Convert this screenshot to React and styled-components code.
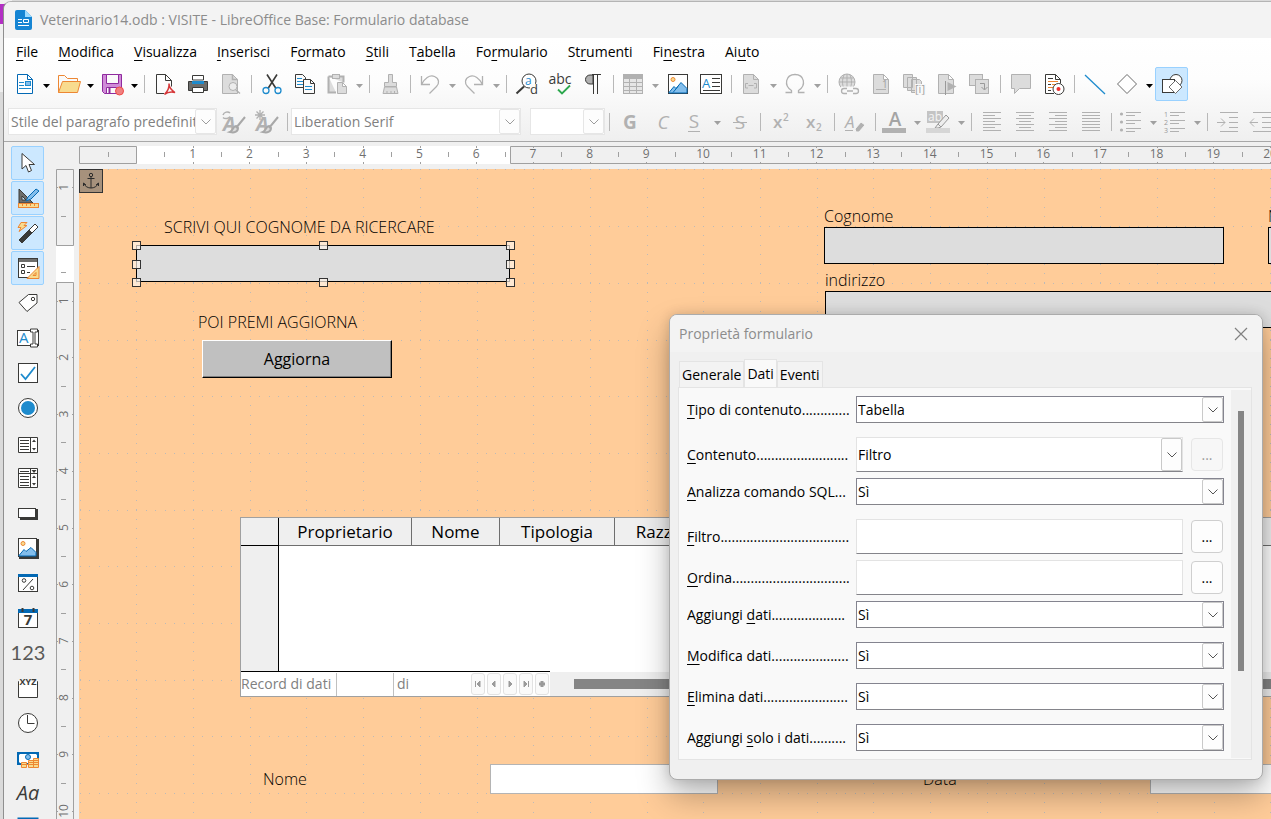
import React, { useState } from "react";
import styled, { createGlobalStyle } from "styled-components";

// pixels in one centimetre of the page at the current zoom
const CM = 56.7;
const PAGE_ZERO_X = 58;
const PAGE_ZERO_Y = 76;

const GREY = "#b1b1b1";
const SOFT = "#dcdcdc";
const DARK = "#3a3a38";
const BLUE = "#1e8bcd";

const menus = [
  ["", "F", "ile"],
  ["", "M", "odifica"],
  ["", "V", "isualizza"],
  ["", "I", "nserisci"],
  ["F", "o", "rmato"],
  ["", "S", "tili"],
  ["T", "a", "bella"],
  ["Fo", "r", "mulario"],
  ["St", "r", "umenti"],
  ["Fi", "n", "estra"],
  ["Ai", "u", "to"],
];

const ICONS = {
  new: (
    <>
      <path d="M4.500 2.500h10l5 5v14h-15z" fill="#fff" stroke="#0369b4" />
      <path d="M14.500 2.500v5h5" fill="none" stroke="#0369b4" />
      <path d="M6 10.500h5M6 13.500h5M6 16.500h12" stroke={BLUE} />
      <rect x="12.500" y="9.500" width="5" height="4" fill="#83beec" stroke={BLUE} />
    </>
  ),
  folder: (
    <>
      <path d="M1.500 20.500v-17h6l3 3h10v3" fill="#fafafa" stroke="#ed8733" />
      <path d="M1.500 20.500l4-11h18l-3 11z" fill="#f8db8f" stroke="#ed8733" />
    </>
  ),
  save: (
    <>
      <path d="M1.500 2.500h19v19h-17l-2-2z" fill="#d08bd8" stroke="#8f2a9e" />
      <path d="M5.500 2.500v9h12v-9z" fill="#fafafa" stroke="#8f2a9e" />
      <path d="M5.500 21.500v-6h10v6z" fill="#fafafa" stroke="#8f2a9e" />
      <path d="M8.500 16v5" stroke="#8f2a9e" strokeWidth="2" />
      <circle cx="18.500" cy="19" r="4" fill="#f08080" stroke="#ed4b48" />
    </>
  ),
  pdf: (
    <>
      <path d="M11 21.500h-7.500v-19h9l6 6v6M12.500 2.500v6h6" fill="none" stroke={DARK} />
      <path d="M11.500 22.500c3-3 5-7 4.500-11c0 4 3 7 6 9c-4-1-8 0-10.500 2z" fill="none" stroke="#d6383a" strokeWidth="1.500" />
    </>
  ),
  print: (
    <>
      <path d="M6.500 8v-4.500h11v4.500z" fill="#fff" stroke={DARK} />
      <path d="M2.500 9.500h19v9h-19z" fill="#6d6d6b" stroke={DARK} />
      <path d="M6 10.500h12" stroke={BLUE} strokeWidth="3" />
      <path d="M6.500 15.500h11v5h-11z" fill="#fff" stroke={DARK} />
    </>
  ),
  preview: (
    <>
      <path d="M3.500 2.500h10l5 5v14h-15z" fill={SOFT} stroke={GREY} />
      <path d="M13.500 2.500v5h5M17 18l4 3.500" fill="none" stroke={GREY} strokeWidth="1.500" />
      <circle cx="14" cy="14.500" r="4" fill="#ececec" stroke={GREY} />
    </>
  ),
  cut: (
    <>
      <path d="M7 2.500l9 14M17 2.500l-9 14" stroke={DARK} strokeWidth="1.600" />
      <circle cx="6" cy="18.500" r="3" fill="none" stroke={BLUE} strokeWidth="1.300" />
      <circle cx="18" cy="18.500" r="3" fill="none" stroke={BLUE} strokeWidth="1.300" />
    </>
  ),
  copy: (
    <>
      <path d="M2.500 2.500h7l3 3v10h-10z" fill="#fafafa" stroke={DARK} />
      <path d="M4 6.500h5M4 9.500h6M4 12.500h6" stroke={BLUE} />
      <path d="M10.500 7.500h7l4 4v10h-11zM17.500 7.500v4h4" fill="#fafafa" stroke={DARK} />
      <path d="M12 14.500h7M12 17.500h7" stroke={BLUE} />
    </>
  ),
  paste: (
    <>
      <path d="M2.500 4.500h15v6M10 20.500h-7.500v-16" fill={SOFT} stroke={GREY} strokeWidth="2" />
      <rect x="6.500" y="2.500" width="7" height="4" fill={SOFT} stroke={GREY} />
      <path d="M11.500 10.500h5l4 4v7h-9zM16.500 10.500v4h4" fill={SOFT} stroke={GREY} />
    </>
  ),
  brush: (
    <>
      <path d="M10.500 10.500v-8h4v8h4v4h-12v-4z" fill={SOFT} stroke={GREY} />
      <path d="M6.500 15l-1.500 6.500h15l-1.500-6.500z" fill={SOFT} stroke={GREY} />
      <path d="M9 21v-2M13 21v-2M16.500 21v-2" stroke={GREY} />
    </>
  ),
  undo: (
    <path d="M2.500 4v8.500h8.500M2.500 12.500c3-6 8-10 13-8c5 2 5 7 2 10l-7 7" fill="none" stroke={GREY} strokeWidth="1.300" />
  ),
  redo: (
    <path d="M19.500 4v8.500h-8.500M19.500 12.500c-3-6-8-10-13-8c-5 2-5 7-2 10l7 7" fill="none" stroke={GREY} strokeWidth="1.300" />
  ),
  find: (
    <>
      <circle cx="14" cy="9" r="7" fill="#fff" stroke={DARK} />
      <path d="M9 14.500l-7.500 7" stroke={DARK} strokeWidth="2" />
      <text x="10" y="13" fontSize="12" fill={BLUE}>a</text>
      <rect x="15" y="12" width="8" height="10" fill="#fbfbfb" />
      <text x="15" y="22" fontSize="13" fill={DARK}>d</text>
    </>
  ),
  spell: (
    <>
      <text x="12" y="12" fontSize="14" textAnchor="middle" fill={DARK}>abc</text>
      <path d="M10 17.500l4 4l8-8" fill="none" stroke="#2ea84f" strokeWidth="1.800" />
    </>
  ),
  pilcrow: (
    <>
      <path d="M12 3h-3a4.500 4.500 0 0 0 0 9h3z" fill={GREY} stroke={DARK} />
      <path d="M11 2.500h9M12.500 2.500v19.500M16.500 2.500v19.500" stroke={DARK} />
    </>
  ),
  table: (
    <>
      <rect x="1.500" y="2.500" width="19" height="19" fill="#e6e6e6" stroke={GREY} />
      <rect x="1" y="2" width="20" height="5" fill={GREY} />
      <path d="M1 10.500h20M1 14.500h20M1 18.500h20M7.500 6v16M14.500 6v16" stroke={GREY} />
    </>
  ),
  image: (
    <>
      <rect x="2.500" y="2.500" width="19" height="19" fill="#fff" stroke={DARK} />
      <circle cx="7" cy="7.500" r="2" fill="#f8db8f" stroke="#ed8733" />
      <path d="M3 20.500l5-6l2 2l5-6l6 6v4.500h-18z" fill="#83beec" stroke="#0369b4" />
      <path d="M7 20.500l5-6" stroke="#0369b4" />
    </>
  ),
  textbox: (
    <>
      <rect x="1.500" y="2.500" width="21" height="19" fill="#fff" stroke={DARK} />
      <text x="3" y="16" fontSize="13" fill={BLUE}>A</text>
      <path d="M13 6.500h8M13 10.500h8M13 14.500h8M4 18.500h17" stroke={DARK} />
    </>
  ),
  field: (
    <>
      <path d="M3.500 2.500h10l5 5v14h-15z" fill={SOFT} stroke={GREY} />
      <path d="M13.500 2.500v5h5M8 11.500h-2.500v4.500h2.500M14 11.500h2.500v4.500h-2.500M8.500 13.500h5" fill="none" stroke={GREY} />
    </>
  ),
  omega: (
    <path d="M1.500 20.500h6v-2c-8-5-6-16 3.500-16s11.500 11 3.500 16v2h6" fill="none" stroke={GREY} strokeWidth="1.300" />
  ),
  link: (
    <>
      <circle cx="11" cy="10" r="8" fill={SOFT} stroke={GREY} />
      <path d="M3 10h16M11 2v16M4.500 6h13M8 3c-2 5-2 9 0 14M14 3c2 5 2 9 0 14" fill="none" stroke={GREY} />
      <path d="M5 14.500h18v8h-18z" fill="#f8f8f8" />
      <path d="M11 16.500h-3a2.500 2.500 0 0 0 0 5h3M17 16.500h3a2.500 2.500 0 0 1 0 5h-3M11 19h6" fill="none" stroke={GREY} strokeWidth="1.300" />
    </>
  ),
  footnote: (
    <>
      <path d="M4.500 2.500h10l5 5v14h-15zM14.500 2.500v5h5" fill={SOFT} stroke={GREY} />
      <text x="13" y="16" fontSize="10" fill="#a0a0a0">1</text>
      <path d="M7 17.500h10" stroke={GREY} />
    </>
  ),
  endnote: (
    <>
      <path d="M1.500 2.500h9v13h-9zM5.500 5.500h9v13h-9zM9.500 7.500h8l2 2v11h-10z" fill={SOFT} stroke={GREY} />
      <rect x="13" y="12" width="11" height="11" fill="#f8f8f8" />
      <text x="13" y="21" fontSize="11" fill="#a0a0a0">[i]</text>
    </>
  ),
  bookmark: (
    <>
      <path d="M3.500 2.500h10l5 5v14h-15zM13.500 2.500v5h5" fill={SOFT} stroke={GREY} />
      <path d="M10.500 9v14" stroke="#999" />
      <path d="M12.500 10v9l9-4.500z" fill={GREY} />
    </>
  ),
  crossref: (
    <>
      <rect x="1.500" y="2.500" width="13" height="11" fill={SOFT} stroke={GREY} />
      <rect x="7.500" y="7.500" width="13" height="14" fill={SOFT} stroke={GREY} />
      <path d="M12 11.500h4.500v6M13.500 15l3 3l3-3" fill="none" stroke="#999" />
    </>
  ),
  comment: <path d="M2.500 2.500h19v14h-11l-5 5v-5h-3z" fill={SOFT} stroke={GREY} />,
  track: (
    <>
      <path d="M12 21.500h-8.500v-19h10l5 5v4M13.500 2.500v5h5" fill="#fff" stroke={DARK} />
      <path d="M6 6.500h5M6 12.500h3M6 18.500h3" stroke={DARK} />
      <path d="M6 9.500h10M10 12.500h4M6 15.500h5" stroke="#ed8733" />
      <circle cx="16.500" cy="17" r="5.500" fill="#fff" stroke={DARK} />
      <circle cx="16.500" cy="17" r="2" fill="#ee2e2e" />
    </>
  ),
  line: <path d="M2 3l20 19" stroke={BLUE} strokeWidth="1.300" />,
  shape: <path d="M11 2.500l9.500 9.500l-9.500 9.500l-9.500-9.500z" fill="#fff" stroke="#6b6b6b" />,
  draw: (
    <>
      <circle cx="16" cy="8.500" r="6" fill="#fff" stroke={DARK} />
      <rect x="2.500" y="7.500" width="12" height="13" fill="#fff" stroke={DARK} />
      <path d="M15.500 8.500l6.500 6.500l-6.500 6.500l-6.500-6.500z" fill="#fff" stroke="#6b6b6b" />
    </>
  ),
  styleUpdate: (
    <>
      <path d="M1 5c1-3 5-4 7-2M8 6.500c-1 2-5 3-7 1" fill="none" stroke={GREY} strokeWidth="1.500" />
      <text x="1" y="21" fontSize="20" fontStyle="italic" fontWeight="700" fill={GREY}>A</text>
      <path d="M23 7l-9 11M14 16c-3 0-3 5-6 6c4 1 8 0 8-4z" fill={SOFT} stroke="#a8a8a8" strokeWidth="2" />
    </>
  ),
  styleNew: (
    <>
      <path d="M5 0v10M0 5h10M1.500 1.500l7 7M8.500 1.500l-7 7" stroke={GREY} strokeWidth="1.300" />
      <text x="1" y="21" fontSize="20" fontStyle="italic" fontWeight="700" fill={GREY}>A</text>
      <path d="M23 7l-9 11M14 16c-3 0-3 5-6 6c4 1 8 0 8-4z" fill={SOFT} stroke="#a8a8a8" strokeWidth="2" />
    </>
  ),
  bold: <text x="12" y="19" fontSize="19" fontWeight="700" textAnchor="middle" fill={GREY}>G</text>,
  italic: <text x="12" y="19" fontSize="19" fontStyle="italic" textAnchor="middle" fill={GREY}>C</text>,
  underline: (
    <>
      <text x="10" y="18" fontSize="19" textAnchor="middle" fill={GREY}>S</text>
      <path d="M4 21.500h12" stroke={GREY} />
    </>
  ),
  strike: (
    <>
      <text x="12" y="19" fontSize="19" textAnchor="middle" fill={GREY}>S</text>
      <path d="M5 12.500h14" stroke={GREY} />
    </>
  ),
  sup: (
    <>
      <text x="4" y="18" fontSize="17" fontWeight="600" fill={GREY}>x</text>
      <text x="14" y="11" fontSize="10" fontWeight="600" fill={GREY}>2</text>
    </>
  ),
  sub: (
    <>
      <text x="4" y="18" fontSize="17" fontWeight="600" fill={GREY}>x</text>
      <text x="14" y="21" fontSize="10" fontWeight="600" fill={GREY}>2</text>
    </>
  ),
  clear: (
    <>
      <text x="2" y="18" fontSize="17" fontStyle="italic" fill={GREY}>A</text>
      <path d="M2 20.500h8" stroke={GREY} />
      <path d="M12 19l6-7l4 3l-6 7h-3z" fill={GREY} stroke="#f4f4f4" />
    </>
  ),
  fontColor: (
    <>
      <text x="11" y="16" fontSize="19" fontWeight="600" textAnchor="middle" fill="#a4a4a4">A</text>
      <rect x="-2" y="18" width="24" height="5" fill={GREY} />
    </>
  ),
  highlight: (
    <>
      <rect x="-1" y="1" width="16" height="12" fill="#c4c4c4" />
      <text x="0" y="11" fontSize="12" fill="#f4f4f4">ab</text>
      <path d="M10 14l8-9l3 3l-8 9zM10 14l-3 4h3l3-1" fill="#eee" stroke="#999" />
      <rect x="-2" y="18" width="24" height="5" fill="#d6d6d6" />
    </>
  ),
  alignLeft: <path d="M3 2.500h18M3 5.500h12M3 8.500h18M3 11.500h12M3 14.500h18M3 17.500h12M3 20.500h18" stroke={GREY} />,
  alignCenter: <path d="M3 2.500h18M6 5.500h12M3 8.500h18M6 11.500h12M3 14.500h18M6 17.500h12M3 20.500h18" stroke={GREY} />,
  alignRight: <path d="M3 2.500h18M9 5.500h12M3 8.500h18M9 11.500h12M3 14.500h18M9 17.500h12M3 20.500h18" stroke={GREY} />,
  justify: <path d="M3 2.500h18M3 5.500h18M3 8.500h18M3 11.500h18M3 14.500h18M3 17.500h18M3 20.500h18" stroke={GREY} />,
  bullets: (
    <>
      <path d="M6 2.500h15M6 5.500h9M6 10.500h15M6 13.500h9M6 18.500h15M6 21.500h9" stroke={GREY} />
      <circle cx="1.500" cy="4" r="1.600" fill={GREY} />
      <circle cx="1.500" cy="12" r="1.600" fill={GREY} />
      <circle cx="1.500" cy="20" r="1.600" fill={GREY} />
    </>
  ),
  numbers: (
    <>
      <path d="M6 2.500h15M6 5.500h9M6 10.500h15M6 13.500h9M6 18.500h15M6 21.500h9" stroke={GREY} />
      <text x="0" y="7" fontSize="7" fill="#999">1</text>
      <text x="0" y="15" fontSize="7" fill="#999">2</text>
      <text x="0" y="23" fontSize="7" fill="#999">3</text>
    </>
  ),
  indent: <path d="M4 2.500h18M13 7.500h9M13 12.500h9M13 17.500h9M4 21.500h18M1 12.500h8M5 8.500l4 4l-4 4" fill="none" stroke={GREY} />,
  outdent: <path d="M4 2.500h18M13 7.500h9M13 12.500h9M13 17.500h9M4 21.500h18M1 12.500h8M5 8.500l-4 4l4 4" fill="none" stroke={GREY} />,
  // form controls palette
  pointer: <path d="M6 2.500v15.500l4-3.500l2.500 6.500l3-1.500l-2.500-6h5.500z" fill="#fff" stroke={DARK} />,
  design: (
    <>
      <path d="M3 3v14h14zM6 10v4h4z" fill="#6d6d6b" fillRule="evenodd" stroke={DARK} />
      <path d="M10 15l2-4l8-8l3 2l-8 8z" fill="#83beec" stroke="#0369b4" />
      <rect x="2.500" y="17.500" width="20" height="4" fill="#f8db8f" stroke="#ed8733" />
      <path d="M6.500 18v2M10.500 18v2M14.500 18v2M18.500 18v2" stroke="#ed8733" />
    </>
  ),
  wizard: (
    <>
      <path d="M3 19l10-10l3 3l-10 10z" fill={DARK} stroke={DARK} />
      <path d="M13 9l6-6l3 3l-6 6z" fill="#fff" stroke={DARK} />
      <path d="M5 1.500h6l-3 3h3l-8 6l2-4h-3z" fill="#f8db8f" stroke="#ed8733" />
    </>
  ),
  formDesign: (
    <>
      <rect x="2.500" y="2.500" width="19" height="19" fill="#fff" stroke={DARK} />
      <rect x="3" y="3" width="18" height="3" fill="#6d6d6b" />
      <path d="M5.500 8.500h3v3h-3zM5.500 14.500h3v3h-3zM11 10.500h8M11 16.500h3" fill="none" stroke={DARK} />
      <path d="M11 22.500h12v-12zM17 19.500h3v-3z" fill="#f8db8f" stroke="#ed8733" />
    </>
  ),
  label: (
    <>
      <path d="M12.500 3.500h8.500v8.500l-10 8.500l-8-9z" fill="#fff" stroke={DARK} />
      <circle cx="17" cy="8" r="1.700" fill="none" stroke={DARK} />
    </>
  ),
  textField: (
    <>
      <rect x="1.500" y="4.500" width="21" height="15" fill="#fff" stroke={DARK} />
      <text x="3" y="17" fontSize="15" fill={BLUE}>A</text>
      <path d="M14.500 3v3h2.500v12h-2.500v3h7v-3h-2.500v-12h2.500v-3z" stroke={DARK} fill="#fff" />
    </>
  ),
  check: (
    <>
      <rect x="2.500" y="2.500" width="19" height="19" fill="#fff" stroke={DARK} />
      <path d="M5 13l4.500 5l9.500-12" fill="none" stroke={BLUE} strokeWidth="1.800" />
    </>
  ),
  radio: (
    <>
      <circle cx="12" cy="12" r="9.500" fill="#fff" stroke={DARK} />
      <circle cx="12" cy="12" r="7" fill={BLUE} />
    </>
  ),
  listBox: (
    <>
      <path d="M2.500 6.500h19v15h-19zM14.500 6.500v15" fill="#fff" stroke={DARK} />
      <path d="M4 9.500h9M4 12.500h9M4 15.500h9M4 18.500h9" stroke={DARK} />
      <path d="M16 11h4l-2-2.500zM16 17h4l-2 2.500z" fill={DARK} />
    </>
  ),
  comboBox: (
    <>
      <path d="M2.500 2.500h19v19h-19zM2.500 7.500h19M14.500 2.500v19" fill="#fff" stroke={DARK} />
      <path d="M4 5.500h9M4 10.500h9M4 13.500h9M4 16.500h9M4 19.500h9" stroke={DARK} />
      <path d="M15.500 4h5l-2.500 3zM16 12h4l-2-2.500zM16 17h4l-2 2.500z" fill={DARK} />
    </>
  ),
  pushButton: (
    <>
      <rect x="4" y="8" width="18" height="11" fill={DARK} />
      <rect x="2.500" y="7.500" width="17" height="9" fill="#fff" stroke={DARK} />
    </>
  ),
  imageButton: (
    <>
      <rect x="3" y="3" width="20" height="20" fill={DARK} />
      <rect x="2.500" y="2.500" width="18" height="18" fill="#fff" stroke={DARK} />
      <circle cx="7" cy="7.500" r="2" fill="#f8db8f" stroke="#ed8733" />
      <path d="M3 19.500l5-6l2 2l5-4l5 5v3.500h-17z" fill="#83beec" stroke="#0369b4" />
    </>
  ),
  formatted: (
    <>
      <rect x="2.500" y="3.500" width="19" height="17" fill="#fff" stroke={DARK} />
      <rect x="2" y="3" width="20" height="3" fill="#0369b4" />
      <path d="M17 8l-10 11" stroke={DARK} />
      <circle cx="8" cy="9.500" r="1.800" fill="none" stroke={DARK} />
      <circle cx="16" cy="17" r="1.800" fill="none" stroke={DARK} />
    </>
  ),
  date: (
    <>
      <rect x="2.500" y="4.500" width="19" height="17" fill="#fff" stroke={DARK} />
      <rect x="2" y="3" width="20" height="4" fill="#0369b4" />
      <path d="M6.500 2v4M17.500 2v4" stroke={DARK} strokeWidth="2" />
      <text x="12" y="19" fontSize="15" fontWeight="700" textAnchor="middle" fill={DARK}>7</text>
    </>
  ),
  number: (
    <text x="12" y="19" fontSize="20" textAnchor="middle" fill="#5a5a58" fontFamily="Liberation Sans Narrow, Lato, sans-serif">
      123
    </text>
  ),
  pattern: (
    <>
      <path d="M3 5.500h-.5v16h19v-16h-.5" fill="#fff" stroke={DARK} />
      <text x="12" y="9" fontSize="9" fontWeight="700" textAnchor="middle" fill={DARK}>XYZ</text>
    </>
  ),
  time: (
    <>
      <circle cx="12" cy="12" r="9.500" fill="#fff" stroke={DARK} />
      <path d="M11.500 4v8.500h7" fill="none" stroke={DARK} />
    </>
  ),
  currency: (
    <>
      <rect x="2" y="7" width="20" height="11" fill="#fff" stroke="#0369b4" strokeWidth="2" />
      <path d="M1 6h5l-5 5zM23 6h-5l5 5zM1 19v-5l5 5z" fill="#0369b4" />
      <circle cx="12" cy="11" r="2.500" fill="#83beec" stroke="#0369b4" />
      <path d="M5.500 16.500h5v5h-5zM12.500 14.500h5v7h-5zM17.500 12.500h5v9h-5z" fill="#f8db8f" stroke="#ed8733" />
      <path d="M5 18.500h18M12 16.500h11M17 14.500h6" stroke="#ed8733" />
    </>
  ),
  fontwork: <text x="12" y="19" fontSize="20" fontStyle="italic" textAnchor="middle" fill={DARK}>Aa</text>,
  navigation: <rect x="2.500" y="2.500" width="19" height="19" fill="#fff" stroke="#0369b4" strokeWidth="2" />,
};

// "|" is a separator, a trailing "v" marks a split button
const standardBar = [
  ["new", "Nuovo", "v"], ["folder", "Apri", "v"], ["save", "Salva", "v"], "|",
  ["pdf", "Esporta in PDF"], ["print", "Stampa"], ["preview", "Anteprima"], "|",
  ["cut", "Taglia"], ["copy", "Copia"], ["paste", "Incolla", "v", true], "|",
  ["brush", "Clona"], "|",
  ["undo", "Annulla", "v", true], ["redo", "Ripristina", "v", true], "|",
  ["find", "Trova"], ["spell", "Controllo ortografico"], ["pilcrow", "Segni"], "|",
  ["table", "Tabella", "v", true], ["image", "Immagine"], ["textbox", "Casella di testo"], "|",
  ["field", "Comando di campo", "v", true], ["omega", "Simbolo", "v", true], "|",
  ["link", "Collegamento"], ["footnote", "Nota a piè di pagina"], ["endnote", "Nota di chiusura"],
  ["bookmark", "Segnalibro"], ["crossref", "Riferimento"], "|",
  ["comment", "Commento"], ["track", "Revisioni"], "|",
  ["line", "Linea"], ["shape", "Forme", "v"],
];

const formatBar = [
  "|", ["bold", "Grassetto"], ["italic", "Corsivo"], ["underline", "Sottolineato", "v", true], ["strike", "Barrato"], "|",
  ["sup", "Apice"], ["sub", "Pedice"], "|", ["clear", "Pulisci"], "|",
  ["fontColor", "Colore carattere", "v", true], ["highlight", "Evidenziazione", "v", true], "|",
  ["alignLeft", "Sinistra"], ["alignCenter", "Centro"], ["alignRight", "Destra"], ["justify", "Giustificato"], "|",
  ["bullets", "Elenco puntato", "v", true], ["numbers", "Elenco numerato", "v", true], "|",
  ["indent", "Aumenta rientro"], ["outdent", "Riduci rientro"],
];

const palette = [
  "pointer", "design", "wizard", "formDesign", "label", "textField", "check", "radio", "listBox", "comboBox",
  "pushButton", "imageButton", "formatted", "date", "number", "pattern", "time", "currency", "fontwork", "navigation",
];

const properties = [
  { name: "tipo", label: ["", "T", "ipo di contenuto"], dots: 13, kind: "list", value: "Tabella" },
  { name: "contenuto", label: ["", "C", "ontenuto"], dots: 25, kind: "combo", value: "Filtro" },
  { name: "sql", label: ["", "A", "nalizza comando SQL"], dots: 3, kind: "list", value: "Sì" },
  { name: "filtro", label: ["", "F", "iltro"], dots: 35, kind: "text" },
  { name: "ordina", label: ["", "O", "rdina"], dots: 32, kind: "text" },
  { name: "aggiungi", label: ["Aggiungi ", "d", "ati"], dots: 20, kind: "list", value: "Sì" },
  { name: "modifica", label: ["", "M", "odifica dati"], dots: 21, kind: "list", value: "Sì" },
  { name: "elimina", label: ["", "E", "limina dati"], dots: 23, kind: "list", value: "Sì" },
  { name: "solo", label: ["Aggiungi ", "s", "olo i dati"], dots: 10, kind: "list", value: "Sì" },
];

const Icon = ({ name }) => (
  <IconSvg viewBox="0 0 24 24" aria-hidden="true">
    {ICONS[name]}
  </IconSvg>
);

const Chevron = () => (
  <svg width="10" height="6" viewBox="0 0 10 6" aria-hidden="true">
    <path d="M0.500 0.500l4.500 4.500l4.500-4.500" fill="none" stroke="currentColor" />
  </svg>
);

const ToolItems = ({ items }) =>
  items.map((item, i) => {
    if (item === "|") return <Separator key={i} />;
    const [name, title, split, disabled] = item;
    return (
      <React.Fragment key={i}>
        <ToolButton aria-label={title}>
          <Icon name={name} />
        </ToolButton>
        {split && (
          <SplitArrow aria-label={title + " menu"} $disabled={disabled}>
            <svg width="7" height="4" viewBox="0 0 7 4">
              <path d="M0 0h7l-3.500 4z" fill="currentColor" />
            </svg>
          </SplitArrow>
        )}
      </React.Fragment>
    );
  });

const HorizontalRuler = () => {
  const marks = Array.from({ length: 22 }, (_, i) => i);
  return (
    <HRuler>
      <rect x="58" y="0" width="374" height="18" fill="#fff" />
      <path d="M0.500 0.500h57v17h-57zM1400 0.500h-968.500v17h968.500" fill="none" stroke="#a0a0a0" />
      <path d="M29.500 6v5" stroke="#a0a0a0" />
      {marks.map((n) => (
        <g key={n}>
          <path d={`M${Math.round(PAGE_ZERO_X + (n + 0.5) * CM) - 0.5} 6v5`} stroke="#a0a0a0" />
          {n > 0 && (
            <>
              <path d={`M${Math.round(PAGE_ZERO_X + n * CM) - 0.5} 0v2m0 14v2`} stroke="#a0a0a0" />
              <text x={PAGE_ZERO_X + n * CM - 1} y="12" textAnchor="middle">{n}</text>
            </>
          )}
        </g>
      ))}
    </HRuler>
  );
};

const VerticalRuler = () => {
  const marks = Array.from({ length: 12 }, (_, i) => i - 1);
  return (
    <VRuler>
      <rect x="0" y="77" width="18" height="36" fill="#fff" />
      <path d="M0.500 0.500h17v76h-17zM0.500 1200v-1086.500h17v1086.500" fill="none" stroke="#a0a0a0" />
      {marks.map((n) => (
        <g key={n}>
          <path d={`M5 ${Math.round(PAGE_ZERO_Y + (n + 0.5) * CM) - 0.5}h5`} stroke="#a0a0a0" />
          {n !== 0 && (
            <>
              <path d={`M0 ${Math.round(PAGE_ZERO_Y + n * CM) - 0.5}h2m14 0h2`} stroke="#a0a0a0" />
              <text transform={`translate(12 ${PAGE_ZERO_Y + n * CM - 1}) rotate(-90)`} textAnchor="middle">
                {Math.abs(n)}
              </text>
            </>
          )}
        </g>
      ))}
    </VRuler>
  );
};

// dotted snap grid, six dots to a centimetre along every whole line
const SnapGrid = () => {
  let d = "";
  for (let i = 0; i < 26; i++) {
    for (let j = 0; j < 90; j++) {
      d += `M${Math.round(i * CM + 0.6)} ${Math.round((j * CM) / 6)}h1v1h-1z`;
    }
  }
  for (let j = 0; j < 15; j++) {
    for (let i = 0; i < 150; i++) {
      d += `M${Math.round((i * CM) / 6 + 0.6)} ${Math.round(j * CM + 0.4)}h1v1h-1z`;
    }
  }
  return (
    <GridSvg aria-hidden="true">
      <path d={d} fill="#bdbab8" shapeRendering="crispEdges" />
    </GridSvg>
  );
};

const PropertyRow = ({ item }) => {
  const [before, key, after] = item.label;
  const tall = item.kind !== "list";
  return (
    <Row>
      <RowLabel htmlFor={item.name} $tall={tall}>
        {before}
        <u>{key}</u>
        {after + ".".repeat(item.dots)}
      </RowLabel>
      {item.kind === "text" ? (
        <TextInput id={item.name} type="text" />
      ) : (
        <Combo $tall={tall}>
          <select id={item.name} defaultValue={item.value}>
            <option>{item.value}</option>
          </select>
          <ComboArrow>
            <Chevron />
          </ComboArrow>
        </Combo>
      )}
      {tall && <MoreButton disabled={item.kind === "combo"}>...</MoreButton>}
    </Row>
  );
};

const PropertiesDialog = () => {
  const [tab, setTab] = useState("Dati");
  return (
    <Dialog role="dialog" aria-label="Proprietà formulario">
      <DialogTitle>
        <span>Proprietà formulario</span>
        <CloseButton aria-label="Chiudi">
          <svg width="14" height="14" viewBox="0 0 14 14">
            <path d="M1 1l12 12M13 1l-12 12" stroke="#808080" strokeWidth="1.200" />
          </svg>
        </CloseButton>
      </DialogTitle>
      <Tabs role="tablist">
        {["Generale", "Dati", "Eventi"].map((name) => (
          <Tab key={name} role="tab" aria-selected={tab === name} $active={tab === name} onClick={() => setTab(name)}>
            {name}
          </Tab>
        ))}
      </Tabs>
      <Panel>
        <Rows>
          {properties.map((item) => (
            <PropertyRow key={item.name} item={item} />
          ))}
        </Rows>
        <ScrollTrack>
          <ScrollThumb />
        </ScrollTrack>
      </Panel>
    </Dialog>
  );
};

const handles = [
  [0, 0], [50, 0], [100, 0], [0, 50], [100, 50], [0, 100], [50, 100], [100, 100],
];

const navIcons = [
  ["Primo", "M1.500 1v6M6 1v6l-3-3z"],
  ["Precedente", "M5 1v6l-3-3z"],
  ["Successivo", "M3 1v6l3-3z"],
  ["Ultimo", "M6.500 1v6M2 1v6l3-3z"],
  ["Nuovo", "M4 1v6M1 4h6"],
];

const App = () => {
  return (
    <Desktop>
      <GlobalStyle />
      <Window>
        <TitleBar>
          <svg width="17" height="20" viewBox="0 0 17 20" aria-hidden="true">
            <path d="M2 0h8l7 7v11a2 2 0 0 1-2 2h-13a2 2 0 0 1-2-2v-16a2 2 0 0 1 2-2z" fill="#1685d3" />
            <path d="M10 0l7 7h-7z" fill="#9fdcff" />
            <path d="M3 9.500h4M3 12.500h4M3 15.500h11" stroke="#fff" />
            <path d="M8.500 9.500h5v3h-5z" fill="none" stroke="#fff" />
          </svg>
          Veterinario14.odb : VISITE - LibreOffice Base: Formulario database
        </TitleBar>
        <Bars>
          <MenuBar>
            {menus.map(([before, key, after]) => (
              <MenuButton key={before + key + after}>
                {before}
                <u>{key}</u>
                {after}
              </MenuButton>
            ))}
          </MenuBar>
          <Toolbar>
            <ToolItems items={standardBar} />
            <ToolButton $active aria-label="Mostra funzioni di disegno">
              <Icon name="draw" />
            </ToolButton>
          </Toolbar>
          <Toolbar $format>
            <FormatCombo $width={209}>
              <select aria-label="Stile di paragrafo" disabled>
                <option>Stile del paragrafo predefinito</option>
              </select>
              <ComboArrow>
                <Chevron />
              </ComboArrow>
            </FormatCombo>
            <ToolButton aria-label="Aggiorna stile">
              <Icon name="styleUpdate" />
            </ToolButton>
            <ToolButton aria-label="Nuovo stile">
              <Icon name="styleNew" />
            </ToolButton>
            <Separator />
            <FormatCombo $width={230}>
              <select aria-label="Nome carattere" disabled>
                <option>Liberation Serif</option>
              </select>
              <ComboArrow>
                <Chevron />
              </ComboArrow>
            </FormatCombo>
            <FormatCombo $width={75} $spaced>
              <select aria-label="Dimensione carattere" disabled>
                <option></option>
              </select>
              <ComboArrow>
                <Chevron />
              </ComboArrow>
            </FormatCombo>
            <ToolItems items={formatBar} />
          </Toolbar>
        </Bars>
        <Workspace>
          <Palette>
            {palette.map((name, i) => (
              <ToolButton key={name} $active={i < 4} aria-label={name}>
                <Icon name={name} />
              </ToolButton>
            ))}
          </Palette>
          <VerticalRuler />
          <PageArea>
            <HorizontalRuler />
            <Canvas>
              <SnapGrid />
              <Anchor $x={0} $y={0}>
                <svg width="18" height="18" viewBox="0 0 18 18" aria-hidden="true">
                  <circle cx="9" cy="3" r="1.700" fill="none" stroke="#2b2b2b" />
                  <path d="M9 5v11M5.500 6.500h7M1.500 14v-3l2.500 2M16.500 14v-3l-2.500 2M2 11.500c1 3 4 4.500 7 4.500s6-1.500 7-4.500" fill="none" stroke="#2b2b2b" />
                </svg>
              </Anchor>

              <FormLabel $x={85} $y={48} htmlFor="ricerca">SCRIVI QUI COGNOME DA RICERCARE</FormLabel>
              <Selected $x={57} $y={76}>
                <FormInput id="ricerca" type="text" />
                {handles.map(([left, top]) => (
                  <Handle key={left + "-" + top} style={{ left: left + "%", top: top + "%" }} />
                ))}
              </Selected>
              <FormLabel $x={119} $y={143} as="span">POI PREMI AGGIORNA</FormLabel>
              <UpdateButton $x={123} $y={171}>Aggiorna</UpdateButton>

              <FormLabel $x={745} $y={37} htmlFor="cognome">Cognome</FormLabel>
              <PlacedInput $x={745} $y={58} $width={400} id="cognome" type="text" />
              <FormLabel $x={1189} $y={37} htmlFor="nome-prop">Nome</FormLabel>
              <PlacedInput $x={1189} $y={58} $width={300} id="nome-prop" type="text" />
              <FormLabel $x={746} $y={101} htmlFor="indirizzo">indirizzo</FormLabel>
              <PlacedInput $x={746} $y={122} $width={600} id="indirizzo" type="text" />

              <GridControl $x={161} $y={348}>
                <DataTable>
                  <colgroup>
                    <col width="38" />
                    <col width="133" />
                    <col width="88" />
                    <col width="115" />
                    <col width="88" />
                    <col />
                  </colgroup>
                  <thead>
                    <tr>
                      <th aria-label="Record"></th>
                      <th>Proprietario</th>
                      <th>Nome</th>
                      <th>Tipologia</th>
                      <th>Razza</th>
                      <th></th>
                    </tr>
                  </thead>
                  <tbody>
                    <tr>
                      <th></th>
                      <td colSpan="5"></td>
                    </tr>
                  </tbody>
                </DataTable>
                <RecordBar>
                  <RecordNav>
                    <label htmlFor="record">Record di dati</label>
                    <RecordInput id="record" type="text" />
                    <span>di</span>
                    <NavButtons>
                      {navIcons.map(([name, d]) => (
                        <NavButton key={name} aria-label={name}>
                          <svg width="8" height="8" viewBox="0 0 8 8">
                            <path d={d} fill="#9a9a9a" stroke="#9a9a9a" strokeWidth={name === "Nuovo" ? 3 : 1} />
                          </svg>
                        </NavButton>
                      ))}
                    </NavButtons>
                  </RecordNav>
                  <HScroll>
                    <HThumb />
                  </HScroll>
                </RecordBar>
              </GridControl>

              <FormLabel $x={184} $y={600} htmlFor="nome">Nome</FormLabel>
              <PlacedInput $x={411} $y={595} $width={228} $plain id="nome" type="text" />
              <FormLabel $x={844} $y={600} htmlFor="data">Data</FormLabel>
              <PlacedInput $x={1071} $y={595} $width={228} $plain id="data" type="text" />

              <PropertiesDialog />
            </Canvas>
          </PageArea>
        </Workspace>
      </Window>
    </Desktop>
  );
};

const GlobalStyle = createGlobalStyle`
  * {
    box-sizing: border-box;
  }
  body {
    margin: 0;
    overflow: hidden;
  }
  body, button, input, select {
    font-family: "Open Sans", "Noto Sans", sans-serif;
    font-size: 14px;
    line-height: 20px;
    color: #000;
  }
  button, input, select {
    margin: 0;
    padding: 0;
    border: 0;
    background: transparent;
    border-radius: 0;
  }
  u {
    text-underline-offset: 3px;
  }
`;

const Desktop = styled.div`
  height: 100vh;
  padding: 1px 0 0 3px;
  background:
    linear-gradient(#b32fc4, #b32fc4) 0 4px / 6px 20px no-repeat,
    linear-gradient(#f0f0f0, #f0f0f0) 0 0 / 12px 92px no-repeat,
    #dadada;
`;

const Window = styled.div`
  height: 100%;
  display: flex;
  flex-direction: column;
  border-left: 1px solid #8f8f8f;
  border-top: 1px solid #b4b4b4;
  border-radius: 8px 0 0 0;
  background: #f0f0f0;
  overflow: hidden;
`;

const TitleBar = styled.div`
  flex: none;
  display: flex;
  align-items: center;
  gap: 8px;
  height: 36px;
  padding-left: 11px;
  background: #f3f3f3;
  color: #8c8c8c;
  white-space: nowrap;
`;

const Bars = styled.div`
  flex: none;
  background: linear-gradient(#fff, #fdfdfd 40%, #efefef);
  border-bottom: 1px solid #a8a8a8;
  overflow: hidden;
`;

const MenuBar = styled.nav`
  display: flex;
  height: 28px;
  padding-left: 2px;
`;

const MenuButton = styled.button`
  padding: 0 10px;
`;

const Toolbar = styled.div`
  display: flex;
  align-items: center;
  height: ${({ $format }) => ($format ? "39px" : "36px")};
  padding-left: 4px;
`;

const ToolButton = styled.button`
  flex: none;
  display: flex;
  align-items: center;
  justify-content: center;
  width: 33px;
  height: 34px;
  border: 1px solid ${({ $active }) => ($active ? "#99d1ff" : "transparent")};
  border-radius: 2px;
  background: ${({ $active }) => ($active ? "#cce8ff" : "transparent")};
`;

const IconSvg = styled.svg`
  flex: none;
  width: 24px;
  height: 24px;
  overflow: visible;
`;

const SplitArrow = styled.button`
  flex: none;
  display: flex;
  justify-content: center;
  width: 11px;
  padding-top: 3px;
  color: ${({ $disabled }) => ($disabled ? "#a0a0a0" : "#000")};
`;

const Separator = styled.span`
  flex: none;
  width: 8px;
  height: 18px;
  background: linear-gradient(#b8b8b8, #b8b8b8) 4px 0 / 1px 100% no-repeat;
`;

const ComboArrow = styled.span`
  flex: none;
  display: flex;
  align-items: center;
  justify-content: center;
  width: 21px;
  border: 1px solid #c9c9c9;
  border-radius: 2px;
  background: #fdfdfd;
  color: #555;
  pointer-events: none;
`;

const Combo = styled.span`
  flex: 1;
  display: flex;
  height: ${({ $tall }) => ($tall ? "35px" : "27px")};
  background: #fff;
  border: 1px solid ${({ $tall }) => ($tall ? "#e3e3e3" : "#84848f")};
  border-bottom-color: #84848a;

  select {
    flex: 1;
    min-width: 0;
    padding-left: 1px;
    appearance: none;
    outline: 0;
  }
`;

const FormatCombo = styled(Combo)`
  flex: none;
  width: ${({ $width }) => $width}px;
  margin-left: ${({ $spaced }) => ($spaced ? "9px" : "0")};
  border-color: #e6e6e6;

  select {
    color: #808080;
    opacity: 1;
    padding-left: 2px;
    text-overflow: clip;
  }
  ${ComboArrow} {
    border-color: #e6e6e6;
    color: #9c9c9c;
  }
`;

const Workspace = styled.div`
  flex: 1;
  min-height: 0;
  display: flex;
`;

const Palette = styled.aside`
  flex: none;
  display: flex;
  flex-direction: column;
  gap: 1px;
  width: 52px;
  padding: 4px 0 0 7px;
  overflow: hidden;
`;

const VRuler = styled.svg`
  flex: none;
  width: 18px;
  height: auto;
  margin-top: 27px;
  font-size: 12px;
  fill: #707070;
`;

const PageArea = styled.div`
  flex: 1;
  min-width: 0;
  display: flex;
  flex-direction: column;
  gap: 5px;
  padding: 4px 0 0 5px;
`;

const HRuler = styled.svg`
  flex: none;
  width: 100%;
  height: 18px;
  font-size: 12px;
  fill: #707070;
`;

const Canvas = styled.main`
  position: relative;
  flex: 1;
  min-height: 0;
  background: #ffcc99;
  overflow: hidden;
`;

const GridSvg = styled.svg`
  display: block;
  width: 100%;
  height: 100%;
`;

// controls sit freely on the form page
const Anchor = styled.div`
  position: absolute;
  left: ${({ $x }) => $x}px;
  top: ${({ $y }) => $y}px;
  display: flex;
  align-items: center;
  justify-content: center;
  width: 24px;
  height: 24px;
  background: #a6917c;
  border: 1px solid #333;
`;

const FormLabel = styled.label`
  position: absolute;
  left: ${({ $x }) => $x}px;
  top: ${({ $y }) => $y}px;
  font-size: 16px;
  font-weight: 300;
  line-height: 20px;
  white-space: nowrap;
`;

const Selected = styled.div`
  position: absolute;
  left: ${({ $x }) => $x}px;
  top: ${({ $y }) => $y}px;
  display: flex;
  width: 374px;
`;

const FormInput = styled.input`
  width: 100%;
  height: 37px;
  padding: 0 4px;
  background: #dddddd;
  border: 1px solid #000;
`;

const PlacedInput = styled(FormInput)`
  position: absolute;
  left: ${({ $x }) => $x}px;
  top: ${({ $y }) => $y}px;
  width: ${({ $width }) => $width}px;
  height: ${({ $plain }) => ($plain ? "30px" : "37px")};
  background: ${({ $plain }) => ($plain ? "#fff" : "#dddddd")};
  border-color: ${({ $plain }) => ($plain ? "#b4b4b4" : "#000")};
`;

const Handle = styled.span`
  position: absolute;
  width: 9px;
  height: 9px;
  margin: -4px 0 0 -4px;
  background: rgba(255, 245, 235, 0.7);
  border: 1px solid #333;
`;

const UpdateButton = styled.button`
  position: absolute;
  left: ${({ $x }) => $x}px;
  top: ${({ $y }) => $y}px;
  width: 190px;
  height: 38px;
  background: #c0c0c0;
  border: 1px solid;
  border-color: #fff #000 #000 #fff;
  box-shadow: inset -1px -1px #808080;
  font-size: 16px;
`;

const GridControl = styled.div`
  position: absolute;
  left: ${({ $x }) => $x}px;
  top: ${({ $y }) => $y}px;
  width: 1200px;
  background: #fff;
  border: 1px solid #a0a0a0;
`;

const DataTable = styled.table`
  width: 100%;
  table-layout: fixed;
  border-collapse: separate;
  border-spacing: 0;
  font-size: 17px;
  line-height: 24px;

  th {
    padding: 0;
    font-weight: 400;
    background: #efefef;
  }
  thead th {
    height: 28px;
    border-right: 1px solid #6e6e6e;
    border-bottom: 1px solid #6e6e6e;
  }
  thead th:first-child {
    border-color: #000;
  }
  tbody th {
    height: 126px;
    border-right: 1px solid #000;
  }
  td {
    padding: 0;
  }
`;

const RecordBar = styled.div`
  display: flex;
  height: 24px;
`;

const RecordNav = styled.div`
  flex: none;
  display: flex;
  align-items: center;
  width: 309px;
  margin-top: -1px;
  border-top: 1px solid #000;
  color: #808080;

  label {
    width: 95px;
    white-space: nowrap;
  }
  span {
    padding-left: 3px;
  }
`;

const RecordInput = styled.input`
  width: 58px;
  height: 23px;
  border: solid #c0c0c0;
  border-width: 0 1px;
`;

const NavButtons = styled.div`
  display: flex;
  gap: 2px;
  margin-left: auto;
  padding-right: 1px;
`;

const NavButton = styled.button`
  display: flex;
  align-items: center;
  justify-content: center;
  width: 14px;
  height: 22px;
  background: #fafafa;
  border: 1px solid #e2e2e2;
  border-radius: 3px;
`;

const HScroll = styled.div`
  flex: 1;
  display: flex;
  align-items: center;
  padding-left: 24px;
  background: #efefef;
`;

const HThumb = styled.div`
  flex: 1;
  height: 10px;
  background: #858585;
`;

const Dialog = styled.section`
  position: absolute;
  left: 590px;
  top: 145px;
  width: 594px;
  padding-bottom: 19px;
  background: #f0f0f0;
  border: 1px solid #ababab;
  border-radius: 8px;
  box-shadow: 0 16px 32px rgba(0, 0, 0, 0.28), 0 0 12px rgba(0, 0, 0, 0.14);
  overflow: hidden;
`;

const DialogTitle = styled.header`
  display: flex;
  align-items: center;
  justify-content: space-between;
  height: 37px;
  padding: 0 14px 0 9px;
  background: #f3f3f3;
  color: #8c8c8c;
`;

const CloseButton = styled.button`
  display: flex;
`;

const Tabs = styled.div`
  display: flex;
  align-items: flex-end;
  height: 35px;
  padding-left: 9px;
`;

const Tab = styled.button`
  height: ${({ $active }) => ($active ? "28px" : "26px")};
  padding: 0 2px;
  background: ${({ $active }) => ($active ? "#f9f9f9" : "#f3f3f3")};
  border: 1px solid #e4e4e4;
  border-bottom: 0;
`;

const Panel = styled.div`
  display: flex;
  margin: 0 10px 0 8px;
  padding: 2px 0 1px;
  background: #f9f9f9;
  border: 1px solid #e4e4e4;
`;

const Rows = styled.div`
  flex: 1;
  padding: 6px 7px 0 8px;
`;

const Row = styled.div`
  display: flex;
  align-items: flex-start;
  height: 41px;

  &:last-child {
    height: 34px;
  }
`;

const RowLabel = styled.label`
  flex: none;
  width: 162px;
  margin-right: 7px;
  line-height: ${({ $tall }) => ($tall ? "35px" : "27px")};
  white-space: nowrap;
  overflow: hidden;
`;

const TextInput = styled.input`
  flex: 1;
  min-width: 0;
  height: 35px;
  padding: 0 2px;
  background: #fff;
  border: 1px solid #e3e3e3;
  border-bottom-color: #84848a;
`;

const MoreButton = styled.button`
  width: 32px;
  height: 33px;
  margin: 1px 1px 0 8px;
  background: #fdfdfd;
  border: 1px solid #cfcfcf;
  border-radius: 4px;

  &:disabled {
    color: #9c9c9c;
    background: #f7f7f7;
    border-color: #e6e6e6;
  }
`;

const ScrollTrack = styled.div`
  width: 20px;
  padding: 21px 7px 0;
  background: #f0f0f0;
`;

const ScrollThumb = styled.div`
  height: 260px;
  background: #858585;
`;

export default App;
